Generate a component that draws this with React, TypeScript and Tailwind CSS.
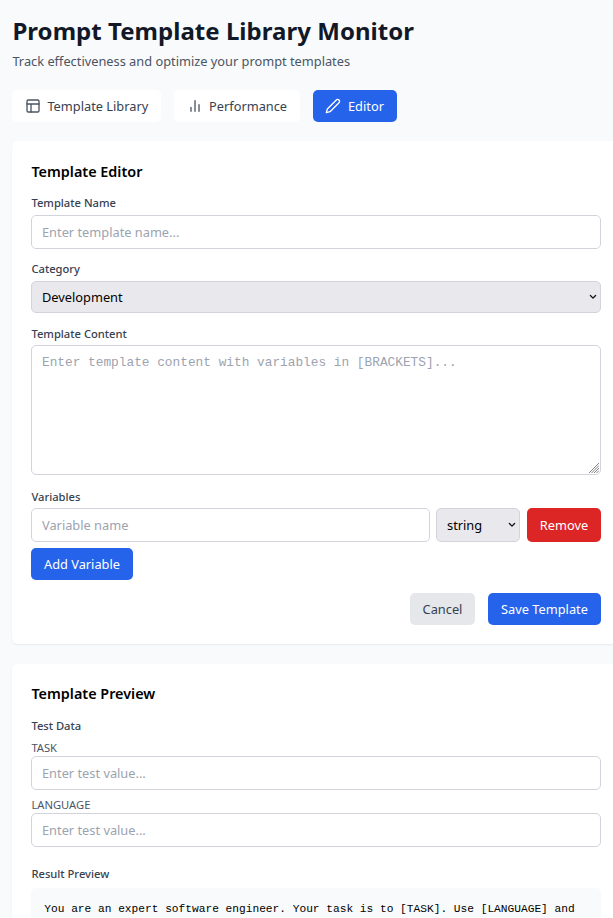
import React from 'react';

const inputClass =
  'block h-[34px] w-full rounded-[5px] border border-[#d1d5db] bg-white pl-[10px] pr-[9px] text-[12.8px] leading-[19.2px] text-black placeholder:text-[#9ca3af] outline-none';

function Label({ children }: { children: React.ReactNode }) {
  return <div className="h-4 pl-[0.4px] text-[11.2px] font-medium leading-4 text-[#374151]">{children}</div>;
}

function Chevron({ className }: { className: string }) {
  return (
    <svg className={className} width="8" height="6" viewBox="0 0 8 6" fill="none" stroke="#111" strokeWidth="1.3" strokeLinecap="round" strokeLinejoin="round">
      <path d="M1.4 1.5 4 4.1 6.6 1.5" />
    </svg>
  );
}

function TestField({ name }: { name: string }) {
  return (
    <div>
      <div className="h-4 pl-[0.4px] text-[11.2px] leading-4 text-[#4b5563]">{name}</div>
      <input className={inputClass} placeholder="Enter test value..." />
    </div>
  );
}

const tabClass = 'flex h-8 items-center rounded-[5px] text-[12.8px] leading-[19.2px]';

const iconProps = {
  width: 16,
  height: 16,
  viewBox: '0 0 24 24',
  fill: 'none',
  stroke: 'currentColor',
  strokeWidth: 2,
  strokeLinecap: 'round' as const,
  strokeLinejoin: 'round' as const,
};

export default function App() {
  return (
    <div className="h-[918px] w-[613px] overflow-hidden bg-[#f9fafb] pl-3 pt-4 font-['Noto_Sans',sans-serif] text-[12.8px] antialiased">
      <div className="w-[608px]">
        <header className="h-[74px] pl-[0.4px]">
          <h1 className="h-[29px] text-[24px] font-bold leading-[29px] tracking-[0.035px] text-[#111827]">Prompt Template Library Monitor</h1>
          <p className="mt-[7px] leading-[19px] text-[#4b5563]">Track effectiveness and optimize your prompt templates</p>
        </header>

        <nav className="flex gap-[13px]">
          <button className={`${tabClass} w-[149px] bg-white pl-[13px] text-[#374151]`}>
            <svg {...iconProps} className="mr-[6.4px] shrink-0 text-[#4b5563]">
              <rect x="3" y="3" width="18" height="18" rx="2" />
              <path d="M3 9h18M9 21V9" />
            </svg>
            <span className="pt-px">Template Library</span>
          </button>
          <button className={`${tabClass} w-[126px] bg-white pl-[13px] text-[#374151]`}>
            <svg {...iconProps} className="mr-[6px] shrink-0 text-[#4b5563]">
              <path d="M18 20V10M12 20V4M6 20v-6" />
            </svg>
            <span className="pt-px">Performance</span>
          </button>
          <button className={`${tabClass} w-[84px] bg-[#2563eb] pl-3 text-white`}>
            <svg {...iconProps} className="mr-[7px] shrink-0">
              <path d="M17 3a2.828 2.828 0 1 1 4 4L7.5 20.5 2 22l1.5-5.5L17 3z" />
            </svg>
            <span className="pt-px">Editor</span>
          </button>
        </nav>

        <section className="mt-[19px] h-[503px] rounded-[6px] bg-white px-[19px] pt-[19px] shadow-[0_1px_2px_rgba(0,0,0,0.07)]">
          <h2 className="h-[23px] pl-[0.4px] text-[14.4px] font-semibold leading-[23px] text-black">Template Editor</h2>
          <div className="mt-3">
            <Label>Template Name</Label>
            <input className={`${inputClass} mt-1`} placeholder="Enter template name..." />
          </div>
          <div className="mt-3">
            <Label>Category</Label>
            <div className="relative mt-1">
              <select className="block h-8 w-full appearance-none rounded-[5px] border border-[#d1d5db] bg-[#e9e9ed] pl-[10px] pt-[2px] text-[12.8px] text-black">
                <option>Development</option>
              </select>
              <Chevron className="pointer-events-none absolute right-1 top-[13px]" />
            </div>
          </div>
          <div className="mt-[13px]">
            <Label>Template Content</Label>
            <div className="relative mt-[3px]">
              <textarea
                className="block h-[130px] w-full resize-none rounded-[5px] border border-[#d1d5db] bg-white px-[10px] py-[7px] font-['Liberation_Mono',monospace] text-[12.8px] leading-[19.2px] text-black outline-none placeholder:text-[#9ca3af]"
                placeholder="Enter template content with variables in [BRACKETS]..."
              />
              <svg className="pointer-events-none absolute bottom-[2px] right-[2px]" width="10" height="10" viewBox="0 0 10 10" stroke="#777" strokeWidth="0.9">
                <path d="M0 10 10 0M2.5 10 10 2.5M5 10 10 5M7.5 10 10 7.5" />
              </svg>
            </div>
          </div>
          <div className="mt-[14px]">
            <Label>Variables</Label>
            <div className="mt-[3px] flex">
              <input className={`${inputClass} max-w-[399px]`} placeholder="Variable name" />
              <div className="relative ml-[6px] w-[84px] shrink-0">
                <select className="block h-[34px] w-full appearance-none rounded-[5px] border border-[#d1d5db] bg-[#e9e9ed] pl-[10px] pt-[2px] text-[12.8px] text-black">
                  <option>string</option>
                </select>
                <Chevron className="pointer-events-none absolute right-1 top-[14px]" />
              </div>
              <button className="ml-[7px] h-[34px] w-[74px] shrink-0 rounded-[5px] bg-[#dc2626] pt-[2px] text-white">Remove</button>
            </div>
            <button className="mt-[6px] block h-8 w-[102px] rounded-[5px] bg-[#2563eb] pt-[2px] text-white">Add Variable</button>
          </div>
          <div className="mt-[13px] flex justify-end gap-[13px]">
            <button className="h-8 w-[65px] rounded-[5px] bg-[#e5e7eb] pt-[2px] text-[#374151]">Cancel</button>
            <button className="h-8 w-[113px] rounded-[5px] bg-[#2563eb] pt-[2px] text-white">Save Template</button>
          </div>
        </section>

        <section className="mt-5 h-[400px] rounded-[6px] bg-white px-[19px] pt-[18px] shadow-[0_1px_2px_rgba(0,0,0,0.07)]">
          <h2 className="h-[23px] pl-[0.4px] text-[14.4px] font-semibold leading-[23px] text-black">Template Preview</h2>
          <div className="mt-[13px]">
            <Label>Test Data</Label>
            <div className="mt-[6px] flex flex-col gap-[7px]">
              <TestField name="TASK" />
              <TestField name="LANGUAGE" />
            </div>
          </div>
          <div className="mt-[19px]">
            <Label>Result Preview</Label>
            <div className="mt-[6px] h-[90px] rounded-[5px] bg-[#f9fafb] pl-[13.3px] pr-3 pt-[13px] font-['Liberation_Mono',monospace] text-[11.2px] leading-4 text-black">
              You are an expert software engineer. Your task is to [TASK]. Use [LANGUAGE] and
            </div>
          </div>
        </section>
      </div>
    </div>
  );
}
